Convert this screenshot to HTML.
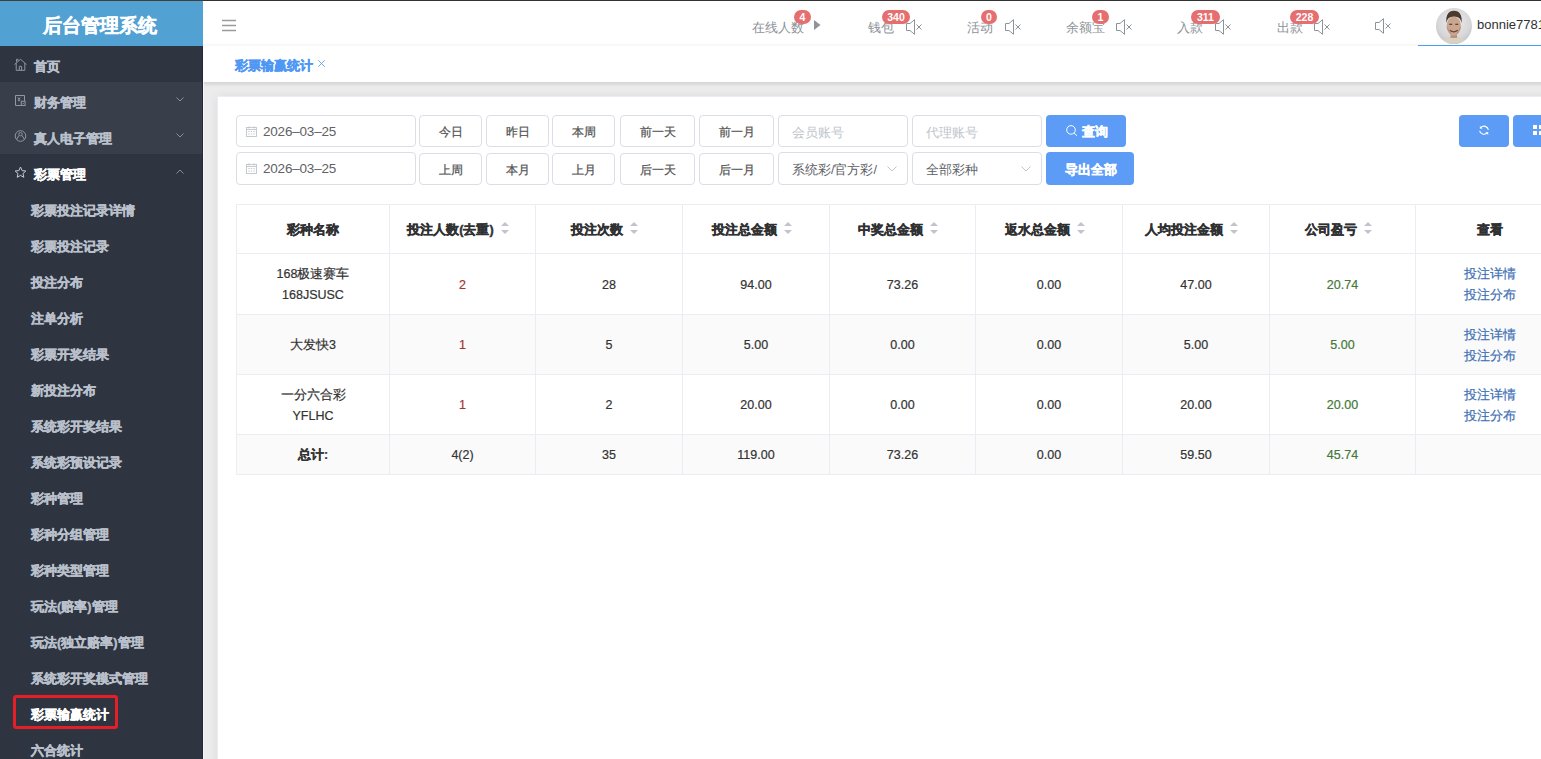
<!DOCTYPE html>
<html><head><meta charset="utf-8">
<style>
*{box-sizing:border-box;margin:0;padding:0}
@font-face{font-family:"LCJK";src:local("Liberation Sans");unicode-range:U+4E00-9FFF;size-adjust:133.33%}
html,body{width:1541px;height:759px;overflow:hidden;background:#fff;font-family:"LCJK","Liberation Sans",sans-serif;}
.abs{position:absolute}
#topline{position:absolute;left:0;top:0;width:1541px;height:1px;background:linear-gradient(90deg,#453d38 0,#453d38 203px,#323331 203px);z-index:5}
#side{position:absolute;left:0;top:1px;width:203px;height:758px;background:#2e3440;overflow:hidden}
#logo{position:absolute;left:0;top:0;width:199px;height:45px;background:#52a1d3;color:#fff;font-size:18.5px;font-weight:bold;text-align:center;line-height:50px;letter-spacing:0px}
.mi{position:absolute;left:0;width:203px;height:36px;line-height:42px;font-size:12.8px;font-weight:bold;color:#b9c0cb;white-space:nowrap}
.mi.lt{background:#383e4a}
.mi .t{position:absolute;left:34px;top:0}
.mi.sub .t{left:31px}
.mi.act .t{color:#fff}
.ico{position:absolute;left:14px;top:12px;width:12px;height:12px}
.arr{position:absolute;left:176px;top:15px;width:8px;height:5px}
#hdr{position:absolute;left:203px;top:1px;width:1338px;height:45px;background:#fff}
#tabs{position:absolute;left:203px;top:46px;width:1338px;height:36px;background:#fff}
#main{position:absolute;left:203px;top:82px;width:1338px;height:677px;background:#ececec}
#card{position:absolute;left:217px;top:96px;width:1400px;height:700px;background:#fff;border-left:1px solid #eaedf5;border-top:1px solid #eaedf5;box-shadow:0 0 10px rgba(0,0,0,0.07)}
.htx{position:absolute;top:19.5px;font-size:12.7px;line-height:16px;color:#8e9299;white-space:nowrap}
.bdg{position:absolute;top:10px;height:14px;border-radius:7px;background:#e56e6e;color:#fff;font-size:10.5px;font-weight:bold;line-height:14px;text-align:center}
.inp{position:absolute;border:1px solid #dcdee6;border-radius:4px;background:#fff}
.ftx{position:absolute;font-size:12.6px;line-height:16px;white-space:nowrap}
.dt{font-size:13.5px;letter-spacing:-0.2px}
.btn{position:absolute;border:1px solid #dcdee6;border-radius:4px;background:#fff;font-size:12.4px;line-height:30px;text-align:center;color:#555;-webkit-text-stroke:0.25px currentColor;padding-top:1px}
.pbtn{position:absolute;border-radius:4px;background:#5c9cf6;color:#fff;font-size:12.8px;line-height:16px;font-weight:bold}
.hl{position:absolute;left:236px;width:1400px;height:1px;background:#ebedf3}
.vl{position:absolute;top:204px;width:1px;height:270px;background:#ebedf3}
.cell{position:absolute;display:flex;align-items:center;justify-content:center;text-align:center;font-size:12.5px;line-height:21px;color:#333;padding-top:2px;-webkit-text-stroke:0.2px currentColor}
.th{font-weight:bold;font-size:12.6px;color:#303133;padding-top:3.5px}
.crt{display:inline-block;position:relative;width:24px;height:14px;vertical-align:middle}
.crt i{position:absolute;left:7px;width:0;height:0;border-left:4px solid transparent;border-right:4px solid transparent}
.crt .up{top:-2px;border-bottom:4px solid #c0c4cc}
.crt .dn{top:6px;border-top:4px solid #c0c4cc}
.red{color:#a83232}.grn{color:#437838}.lnk{color:#3d70b5;font-size:12.6px}
.mi,#logo,.th,.pbtn,.tabt{-webkit-text-stroke:0.4px currentColor}
</style></head>
<body>
<div id="topline"></div>
<div id="side">
  <div style="position:absolute;left:0;top:0;width:203px;height:45px;background:#52a1d3"></div><div id="logo">后台管理系统</div>
  <div class="mi" style="top:45px"><span class="t">首页</span></div>
  <div class="mi lt" style="top:81px"><span class="t">财务管理</span><svg class="arr" viewBox="0 0 8 5"><path d="M0.5 0.5 L4 4 L7.5 0.5" fill="none" stroke="#8a8f99" stroke-width="1"/></svg></div>
  <div class="mi lt" style="top:117px"><span class="t">真人电子管理</span><svg class="arr" viewBox="0 0 8 5"><path d="M0.5 0.5 L4 4 L7.5 0.5" fill="none" stroke="#8a8f99" stroke-width="1"/></svg></div>
  <div class="mi act" style="top:153px"><span class="t">彩票管理</span><svg class="arr" viewBox="0 0 8 5"><path d="M0.5 4.5 L4 1 L7.5 4.5" fill="none" stroke="#8a8f99" stroke-width="1"/></svg></div>
  <div class="mi sub" style="top:189px"><span class="t">彩票投注记录详情</span></div>
  <div class="mi sub" style="top:225px"><span class="t">彩票投注记录</span></div>
  <div class="mi sub" style="top:261px"><span class="t">投注分布</span></div>
  <div class="mi sub" style="top:297px"><span class="t">注单分析</span></div>
  <div class="mi sub" style="top:333px"><span class="t">彩票开奖结果</span></div>
  <div class="mi sub" style="top:369px"><span class="t">新投注分布</span></div>
  <div class="mi sub" style="top:405px"><span class="t">系统彩开奖结果</span></div>
  <div class="mi sub" style="top:441px"><span class="t">系统彩预设记录</span></div>
  <div class="mi sub" style="top:477px"><span class="t">彩种管理</span></div>
  <div class="mi sub" style="top:513px"><span class="t">彩种分组管理</span></div>
  <div class="mi sub" style="top:549px"><span class="t">彩种类型管理</span></div>
  <div class="mi sub" style="top:585px"><span class="t">玩法(赔率)管理</span></div>
  <div class="mi sub" style="top:621px"><span class="t">玩法(独立赔率)管理</span></div>
  <div class="mi sub" style="top:657px"><span class="t">系统彩开奖模式管理</span></div>
  <div class="mi sub act" style="top:693px"><span class="t">彩票输赢统计</span></div>
  <div class="mi sub" style="top:729px"><span class="t">六合统计</span></div>
  <div class="abs" style="left:13px;top:694px;width:105px;height:34px;border:3px solid #e61e28;border-radius:3px"></div>
</div>
<div class="abs" style="left:202px;top:46px;width:1px;height:713px;background:#232834"></div>
<svg class="abs" style="left:0;top:0" width="203" height="190" viewBox="0 0 203 190">
<g fill="none" stroke="#9096a2" stroke-width="1">
<path d="M14.5 64.5 L20.5 59.3 L26.5 64.5 M16.2 63.2 V70.3 H24.8 V63.2 M19.3 70.3 V66.3 H21.6 V70.3 M16.5 61.8 V59.3 H18 V60.8"/>
<path d="M24.5 101 V95.5 H15.5 V105.5 H21 M17.8 97.5 L19 99.3 L20.2 97.5 M19 99.3 V101.2 M17.8 100.2 H20.2"/>
<rect x="21.3" y="101.3" width="3.8" height="4.2"/>
<path d="M22.3 104.3 Q23.2 102.3 24.3 104" stroke-width="0.8"/>
<circle cx="20.5" cy="136" r="5.3"/>
<circle cx="20.5" cy="134.2" r="1.7"/>
<path d="M18.8 135.6 L16.5 139.6 M22.2 135.6 L24.5 139.6"/>
</g>
<path d="M20.5 167 L22.1 170.6 L25.8 171 L23 173.6 L23.8 177.3 L20.5 175.4 L17.2 177.3 L18 173.6 L15.2 171 L18.9 170.6 Z" fill="none" stroke="#c9cdd4" stroke-width="1" stroke-linejoin="round"/>
</svg>
<div id="hdr">
  <svg class="abs" style="left:19px;top:18px" width="14" height="13" viewBox="0 0 14 13"><path d="M0 1.5 H14 M0 6.5 H14 M0 11.5 H14" stroke="#9b9b9b" stroke-width="1.4"/></svg>
</div>
<div class="htx" style="left:752px">在线人数</div><div class="bdg" style="left:794px;width:17px">4</div><svg class="abs" style="left:814px;top:20px" width="7" height="10" viewBox="0 0 7 10"><path d="M0 0 L6.5 5 L0 10 Z" fill="#8e9299"/></svg>
<div class="htx" style="left:868px">钱包</div><div class="bdg" style="left:882px;width:28px">340</div><svg class="abs" style="left:906px;top:19px" width="17" height="16" viewBox="0 0 17 16"><path d="M0.5 4.5 H4 L8.5 0.7 V15.3 L4 11.5 H0.5 Z" fill="none" stroke="#8e9299" stroke-width="1" stroke-linejoin="round"/><path d="M10.5 5.5 L15.5 10.5 M15.5 5.5 L10.5 10.5" stroke="#8e9299" stroke-width="1"/></svg>
<div class="htx" style="left:967px">活动</div><div class="bdg" style="left:981px;width:16px">0</div><svg class="abs" style="left:1005px;top:19px" width="17" height="16" viewBox="0 0 17 16"><path d="M0.5 4.5 H4 L8.5 0.7 V15.3 L4 11.5 H0.5 Z" fill="none" stroke="#8e9299" stroke-width="1" stroke-linejoin="round"/><path d="M10.5 5.5 L15.5 10.5 M15.5 5.5 L10.5 10.5" stroke="#8e9299" stroke-width="1"/></svg>
<div class="htx" style="left:1066px">余额宝</div><div class="bdg" style="left:1092px;width:17px">1</div><svg class="abs" style="left:1116px;top:19px" width="17" height="16" viewBox="0 0 17 16"><path d="M0.5 4.5 H4 L8.5 0.7 V15.3 L4 11.5 H0.5 Z" fill="none" stroke="#8e9299" stroke-width="1" stroke-linejoin="round"/><path d="M10.5 5.5 L15.5 10.5 M15.5 5.5 L10.5 10.5" stroke="#8e9299" stroke-width="1"/></svg>
<div class="htx" style="left:1177px">入款</div><div class="bdg" style="left:1191px;width:29px">311</div><svg class="abs" style="left:1215px;top:19px" width="17" height="16" viewBox="0 0 17 16"><path d="M0.5 4.5 H4 L8.5 0.7 V15.3 L4 11.5 H0.5 Z" fill="none" stroke="#8e9299" stroke-width="1" stroke-linejoin="round"/><path d="M10.5 5.5 L15.5 10.5 M15.5 5.5 L10.5 10.5" stroke="#8e9299" stroke-width="1"/></svg>
<div class="htx" style="left:1277px">出款</div><div class="bdg" style="left:1290px;width:29px">228</div><svg class="abs" style="left:1314px;top:19px" width="17" height="16" viewBox="0 0 17 16"><path d="M0.5 4.5 H4 L8.5 0.7 V15.3 L4 11.5 H0.5 Z" fill="none" stroke="#8e9299" stroke-width="1" stroke-linejoin="round"/><path d="M10.5 5.5 L15.5 10.5 M15.5 5.5 L10.5 10.5" stroke="#8e9299" stroke-width="1"/></svg>
<svg class="abs" style="left:1375px;top:18px" width="17" height="16" viewBox="0 0 17 16"><path d="M0.5 4.5 H4 L8.5 0.7 V15.3 L4 11.5 H0.5 Z" fill="none" stroke="#8e9299" stroke-width="1" stroke-linejoin="round"/><path d="M10.5 5.5 L15.5 10.5 M15.5 5.5 L10.5 10.5" stroke="#8e9299" stroke-width="1"/></svg>
<div class="abs" style="left:1436px;top:8px;width:36px;height:36px;border-radius:50%;overflow:hidden;background:radial-gradient(circle at 50% 40%,#ececee 0%,#d8d8db 55%,#b2b2b6 100%)">
<svg width="36" height="36" viewBox="0 0 36 36"><path d="M6 36 Q8 30 13.5 28.5 L22.5 28.5 Q28 30 30 36 Z" fill="#d9d1c2"/><path d="M14.5 25 V30 H21 V25 Z" fill="#b89480"/><ellipse cx="17.8" cy="18" rx="7.2" ry="9.6" fill="#caa690"/><path d="M10.3 15 Q9.5 3 18 2.8 Q26.5 3 25.6 15 Q24.5 8.5 18 8.6 Q11.5 8.5 10.3 15 Z" fill="#4a3a2f"/><path d="M13.8 22.3 Q17.8 25.5 21.8 22.3" stroke="#6b4436" stroke-width="1.1" fill="none"/><path d="M13.2 16.2 h3 M19.3 16.2 h3" stroke="#3a2a22" stroke-width="1.1"/><path d="M11 19 Q13 24 15 26 M24.5 19 Q22.5 24 20.5 26" stroke="#b08a74" stroke-width="0.8" fill="none"/></svg></div>
<div class="abs" style="left:1477px;top:17px;font-size:13px;line-height:16px;color:#303133;white-space:nowrap">bonnie7781</div>

<div id="tabs"></div>
<div class="abs" style="left:203px;top:42px;width:1338px;height:4px;background:linear-gradient(rgba(0,0,0,0),rgba(0,0,0,0.035))"></div>
<div class="abs" style="left:1418px;top:45px;width:123px;height:1px;background:#4a9ff5"></div>
<div class="abs tabt" style="left:235px;top:57.5px;font-size:12.6px;line-height:16px;font-weight:bold;color:#4f97f4;white-space:nowrap">彩票输赢统计</div>
<svg class="abs" style="left:318px;top:60px" width="7" height="7" viewBox="0 0 7 7"><path d="M0.3 0.3 L6.7 6.7 M6.7 0.3 L0.3 6.7" stroke="#5b9df5" stroke-width="0.9"/></svg>
<div id="main"></div>
<div class="abs" style="left:203px;top:82px;width:1338px;height:5px;background:linear-gradient(rgba(0,0,0,0.10),rgba(0,0,0,0))"></div>
<div class="abs" style="left:203px;top:82px;width:1px;height:677px;background:#f6f6f6"></div>
<div id="card"></div>
<div class="inp" style="left:236px;top:115px;width:180px;height:32px;"></div><svg class="abs" style="left:246px;top:126px" width="11" height="11" viewBox="0 0 11 11"><rect x="0.5" y="1.5" width="10" height="9" fill="none" stroke="#c0c4cc" stroke-width="0.9"/><path d="M0.5 3.5 H10.5 M3 0.3 V2.5 M8 0.3 V2.5" stroke="#c0c4cc" stroke-width="0.9"/><path d="M2.3 5.5 h1.4 M4.8 5.5 h1.4 M7.3 5.5 h1.4 M2.3 8 h1.4 M4.8 8 h1.4 M7.3 8 h1.4" stroke="#c0c4cc" stroke-width="0.9"/></svg><div class="ftx dt" style="left:263px;top:124px;color:#606266">2026–03–25</div>
<div class="inp" style="left:236px;top:152px;width:180px;height:33px;"></div><svg class="abs" style="left:246px;top:163px" width="11" height="11" viewBox="0 0 11 11"><rect x="0.5" y="1.5" width="10" height="9" fill="none" stroke="#c0c4cc" stroke-width="0.9"/><path d="M0.5 3.5 H10.5 M3 0.3 V2.5 M8 0.3 V2.5" stroke="#c0c4cc" stroke-width="0.9"/><path d="M2.3 5.5 h1.4 M4.8 5.5 h1.4 M7.3 5.5 h1.4 M2.3 8 h1.4 M4.8 8 h1.4 M7.3 8 h1.4" stroke="#c0c4cc" stroke-width="0.9"/></svg><div class="ftx dt" style="left:263px;top:161px;color:#606266">2026–03–25</div>
<div class="btn" style="left:419px;top:115px;width:63px;height:32px">今日</div>
<div class="btn" style="left:486px;top:115px;width:63px;height:32px">昨日</div>
<div class="btn" style="left:552px;top:115px;width:63px;height:32px">本周</div>
<div class="btn" style="left:620px;top:115px;width:75px;height:32px">前一天</div>
<div class="btn" style="left:699px;top:115px;width:75px;height:32px">前一月</div>
<div class="btn" style="left:419px;top:153px;width:63px;height:32px">上周</div>
<div class="btn" style="left:486px;top:153px;width:63px;height:32px">本月</div>
<div class="btn" style="left:552px;top:153px;width:63px;height:32px">上月</div>
<div class="btn" style="left:620px;top:153px;width:75px;height:32px">后一天</div>
<div class="btn" style="left:699px;top:153px;width:75px;height:32px">后一月</div>
<div class="inp" style="left:778px;top:115px;width:130px;height:32px;"></div><div class="ftx" style="left:792px;top:124.5px;color:#c0c4cc">会员账号</div>
<div class="inp" style="left:912px;top:115px;width:130px;height:32px;"></div><div class="ftx" style="left:926px;top:124.5px;color:#c0c4cc">代理账号</div>
<div class="inp" style="left:778px;top:152px;width:130px;height:33px;"></div><div class="ftx" style="left:792px;top:161.5px;color:#606266">系统彩/官方彩/</div><svg class="abs" style="left:887px;top:166px" width="10" height="6" viewBox="0 0 10 6"><path d="M0.5 0.5 L5 5 L9.5 0.5" fill="none" stroke="#c0c4cc" stroke-width="1"/></svg>
<div class="inp" style="left:912px;top:152px;width:130px;height:33px;"></div><div class="ftx" style="left:926px;top:161.5px;color:#606266">全部彩种</div><svg class="abs" style="left:1021px;top:166px" width="10" height="6" viewBox="0 0 10 6"><path d="M0.5 0.5 L5 5 L9.5 0.5" fill="none" stroke="#c0c4cc" stroke-width="1"/></svg>
<div class="pbtn" style="left:1046px;top:115px;width:80px;height:32px"><svg style="position:absolute;left:19.5px;top:10px" width="12" height="12" viewBox="0 0 12 12"><circle cx="5" cy="4.9" r="4.3" fill="none" stroke="#fff" stroke-width="1"/><path d="M8.1 8 L11 10.8" stroke="#fff" stroke-width="1"/></svg><span style="position:absolute;left:36px;top:9px">查询</span></div>
<div class="pbtn" style="left:1046px;top:152px;width:88px;height:33px"><span style="position:absolute;left:19px;top:9.5px">导出全部</span></div>
<div class="pbtn" style="left:1459px;top:115px;width:50px;height:32px"><svg style="position:absolute;left:0;top:0" width="50" height="32" viewBox="0 0 50 32"><path d="M21.8 12.6 A4.4 4.4 0 0 1 29.4 14.9" fill="none" stroke="#fff" stroke-width="1.1"/><path d="M20.6 15.8 A4.4 4.4 0 0 0 27.8 18.1" fill="none" stroke="#fff" stroke-width="1.1"/><path d="M20.9 10.9 L20.9 13.8 L23.7 13.6 Z" fill="#fff"/><path d="M29.2 17 L29.2 19.9 L26.4 17.2 Z" fill="#fff"/></svg></div>
<div class="pbtn" style="left:1513px;top:115px;width:50px;height:32px"><div style="position:absolute;left:20px;top:10.3px;width:4px;height:3.8px;background:#fff"></div><div style="position:absolute;left:26px;top:10.3px;width:4px;height:3.8px;background:#fff"></div><div style="position:absolute;left:20px;top:16px;width:4px;height:4px;background:#fff"></div><div style="position:absolute;left:26px;top:16px;width:4px;height:4px;background:#fff"></div></div>
<div class="abs" style="left:236px;top:314px;width:1400px;height:60px;background:#fafafa"></div>
<div class="abs" style="left:236px;top:434px;width:1400px;height:40px;background:#fafafa"></div>
<div class="hl" style="top:204px"></div>
<div class="hl" style="top:253px"></div>
<div class="hl" style="top:314px"></div>
<div class="hl" style="top:374px"></div>
<div class="hl" style="top:434px"></div>
<div class="hl" style="top:474px"></div>
<div class="vl" style="left:236px"></div>
<div class="vl" style="left:389px"></div>
<div class="vl" style="left:535px"></div>
<div class="vl" style="left:682px"></div>
<div class="vl" style="left:829px"></div>
<div class="vl" style="left:975px"></div>
<div class="vl" style="left:1122px"></div>
<div class="vl" style="left:1269px"></div>
<div class="vl" style="left:1415px"></div>
<div class="cell th" style="left:237px;top:205px;width:152px;height:48px"><div>彩种名称</div></div>
<div class="cell th" style="left:390px;top:205px;width:145px;height:48px"><div>投注人数(去重)<span class="crt"><i class="up"></i><i class="dn"></i></span></div></div>
<div class="cell th" style="left:536px;top:205px;width:146px;height:48px"><div>投注次数<span class="crt"><i class="up"></i><i class="dn"></i></span></div></div>
<div class="cell th" style="left:683px;top:205px;width:146px;height:48px"><div>投注总金额<span class="crt"><i class="up"></i><i class="dn"></i></span></div></div>
<div class="cell th" style="left:830px;top:205px;width:145px;height:48px"><div>中奖总金额<span class="crt"><i class="up"></i><i class="dn"></i></span></div></div>
<div class="cell th" style="left:976px;top:205px;width:146px;height:48px"><div>返水总金额<span class="crt"><i class="up"></i><i class="dn"></i></span></div></div>
<div class="cell th" style="left:1123px;top:205px;width:146px;height:48px"><div>人均投注金额<span class="crt"><i class="up"></i><i class="dn"></i></span></div></div>
<div class="cell th" style="left:1270px;top:205px;width:145px;height:48px"><div>公司盈亏<span class="crt"><i class="up"></i><i class="dn"></i></span></div></div>
<div class="cell th" style="left:1416px;top:205px;width:147px;height:48px"><div>查看</div></div>
<div class="cell" style="left:237px;top:254px;width:152px;height:60px"><div>168极速赛车<br>168JSUSC</div></div>
<div class="cell" style="left:390px;top:254px;width:145px;height:60px"><div><span class="red">2</span></div></div>
<div class="cell" style="left:536px;top:254px;width:146px;height:60px"><div>28</div></div>
<div class="cell" style="left:683px;top:254px;width:146px;height:60px"><div>94.00</div></div>
<div class="cell" style="left:830px;top:254px;width:145px;height:60px"><div>73.26</div></div>
<div class="cell" style="left:976px;top:254px;width:146px;height:60px"><div>0.00</div></div>
<div class="cell" style="left:1123px;top:254px;width:146px;height:60px"><div>47.00</div></div>
<div class="cell" style="left:1270px;top:254px;width:145px;height:60px"><div><span class="grn">20.74</span></div></div>
<div class="cell" style="left:1416px;top:254px;width:147px;height:60px"><div><span class="lnk">投注详情<br>投注分布</span></div></div>
<div class="cell" style="left:237px;top:315px;width:152px;height:59px"><div>大发快3</div></div>
<div class="cell" style="left:390px;top:315px;width:145px;height:59px"><div><span class="red">1</span></div></div>
<div class="cell" style="left:536px;top:315px;width:146px;height:59px"><div>5</div></div>
<div class="cell" style="left:683px;top:315px;width:146px;height:59px"><div>5.00</div></div>
<div class="cell" style="left:830px;top:315px;width:145px;height:59px"><div>0.00</div></div>
<div class="cell" style="left:976px;top:315px;width:146px;height:59px"><div>0.00</div></div>
<div class="cell" style="left:1123px;top:315px;width:146px;height:59px"><div>5.00</div></div>
<div class="cell" style="left:1270px;top:315px;width:145px;height:59px"><div><span class="grn">5.00</span></div></div>
<div class="cell" style="left:1416px;top:315px;width:147px;height:59px"><div><span class="lnk">投注详情<br>投注分布</span></div></div>
<div class="cell" style="left:237px;top:375px;width:152px;height:59px"><div>一分六合彩<br>YFLHC</div></div>
<div class="cell" style="left:390px;top:375px;width:145px;height:59px"><div><span class="red">1</span></div></div>
<div class="cell" style="left:536px;top:375px;width:146px;height:59px"><div>2</div></div>
<div class="cell" style="left:683px;top:375px;width:146px;height:59px"><div>20.00</div></div>
<div class="cell" style="left:830px;top:375px;width:145px;height:59px"><div>0.00</div></div>
<div class="cell" style="left:976px;top:375px;width:146px;height:59px"><div>0.00</div></div>
<div class="cell" style="left:1123px;top:375px;width:146px;height:59px"><div>20.00</div></div>
<div class="cell" style="left:1270px;top:375px;width:145px;height:59px"><div><span class="grn">20.00</span></div></div>
<div class="cell" style="left:1416px;top:375px;width:147px;height:59px"><div><span class="lnk">投注详情<br>投注分布</span></div></div>
<div class="cell" style="left:237px;top:435px;width:152px;height:39px"><div><b>总计:</b></div></div>
<div class="cell" style="left:390px;top:435px;width:145px;height:39px"><div>4(2)</div></div>
<div class="cell" style="left:536px;top:435px;width:146px;height:39px"><div>35</div></div>
<div class="cell" style="left:683px;top:435px;width:146px;height:39px"><div>119.00</div></div>
<div class="cell" style="left:830px;top:435px;width:145px;height:39px"><div>73.26</div></div>
<div class="cell" style="left:976px;top:435px;width:146px;height:39px"><div>0.00</div></div>
<div class="cell" style="left:1123px;top:435px;width:146px;height:39px"><div>59.50</div></div>
<div class="cell" style="left:1270px;top:435px;width:145px;height:39px"><div><span class="grn">45.74</span></div></div>
<div class="cell" style="left:1416px;top:435px;width:147px;height:39px"><div></div></div>
</body></html>
